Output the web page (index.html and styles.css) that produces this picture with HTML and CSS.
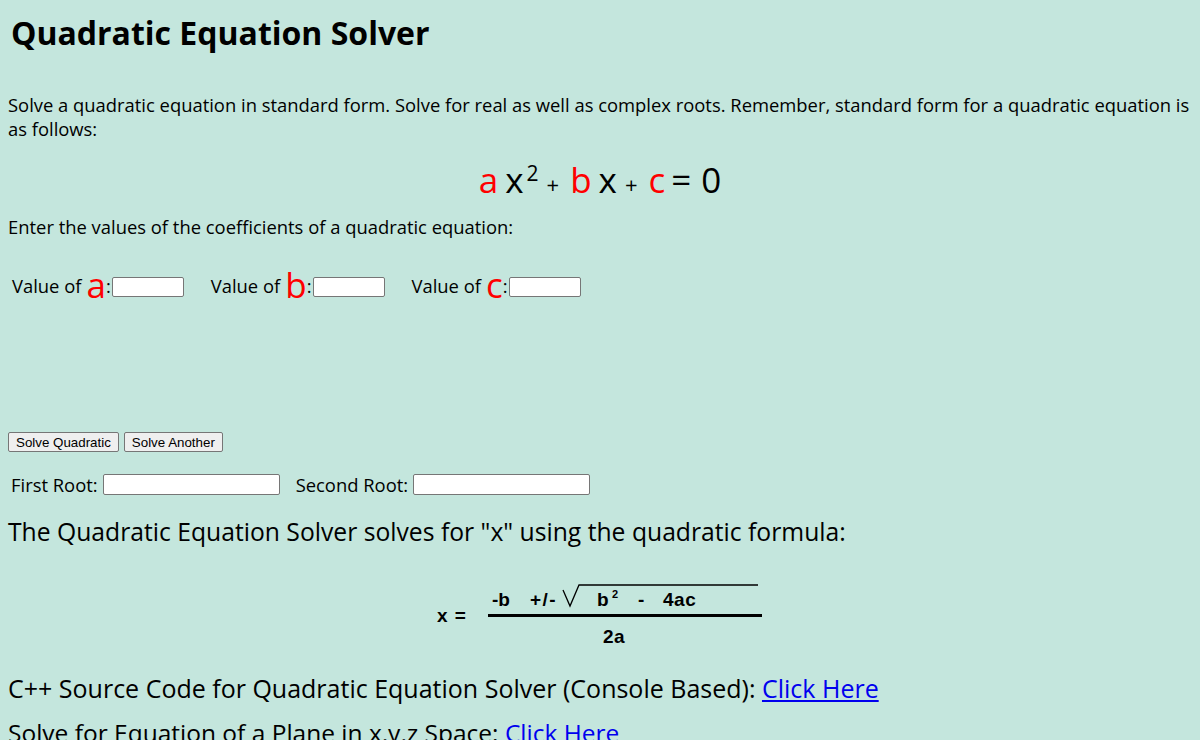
FILE: index.html
```html
<!DOCTYPE html>
<html>
<head>
<meta charset="utf-8">
<title>Quadratic Equation Solver</title>
<link rel="stylesheet" href="styles.css">
</head>
<body>
<h1 class="title">Quadratic Equation Solver</h1>
<p class="intro">Solve a quadratic equation in standard form. Solve for real as well as complex roots. Remember, standard form for a quadratic equation is as follows:</p>
<div class="equation"><span class="coef">a</span><span class="var">x</span><sup class="sq">2</sup><span class="plus">+</span><span class="coef">b</span><span class="var">x</span><span class="plus">+</span><span class="coef">c</span><span class="eq">=</span><span class="zero">0</span></div>
<p class="prompt">Enter the values of the coefficients of a quadratic equation:</p>
<div class="values">
  <label class="field">Value of <span class="big">a</span>:<input class="coef-in" type="text"></label>
  <label class="field">Value of <span class="big">b</span>:<input class="coef-in" type="text"></label>
  <label class="field">Value of <span class="big">c</span>:<input class="coef-in" type="text"></label>
</div>
<div class="buttons">
  <button class="btn" type="button">Solve Quadratic</button>
  <button class="btn" type="button">Solve Another</button>
</div>
<div class="roots">
  <label class="root">First Root: <input class="root-in" type="text"></label>
  <label class="root">Second Root: <input class="root-in" type="text"></label>
</div>
<p class="lead">The Quadratic Equation Solver solves for "x" using the quadratic formula:</p>
<div class="formula">
  <svg class="formula-svg" width="340" height="77" viewBox="0 0 340 77">
    <text x="7" y="44" class="fx">x =</text>
    <text x="62" y="28" class="ft">-b</text>
    <text x="100" y="28" class="ft" letter-spacing="1.5">+/-</text>
    <path d="M133 12 L140 28 L149 7 L328 7" fill="none" stroke="#000" stroke-width="1.3"/>
    <text x="167" y="28" class="ft">b</text>
    <text x="182" y="20" class="fs">2</text>
    <text x="208" y="28" class="ft">-</text>
    <text x="233" y="28" class="ft" letter-spacing="0.5">4ac</text>
    <line x1="58" y1="37.5" x2="332" y2="37.5" stroke="#000" stroke-width="3"/>
    <text x="173" y="65" class="ft" letter-spacing="0.5">2a</text>
  </svg>
</div>
<p class="lead link-line">C++ Source Code for Quadratic Equation Solver (Console Based): <a href="#">Click Here</a></p>
<p class="lead link-line2">Solve for Equation of a Plane in x,y,z Space: <a href="#">Click Here</a></p>
</body>
</html>
```
FILE: styles.css
```css
html, body {
  background: #c4e6dd;
}
body {
  margin: 0;
  padding: 0 8px;
  font-family: "Open Sans", "Noto Sans", sans-serif;
  font-size: 18.4px;
  color: #000;
  overflow: hidden;
}
.title {
  margin: 13px 0 0 3px;
  font-size: 32px;
  line-height: 40px;
  font-weight: 700;
}
.intro {
  margin: 40px 0 0;
  line-height: 24px;
}
.equation {
  margin-top: 19px;
  height: 40px;
  line-height: 40px;
  text-align: center;
  font-size: 35px;
  padding-left: 0;
}
.coef { color: #ff0000; }
.var { margin-left: 7px; }
.sq {
  font-size: 21px;
  vertical-align: 12px;
  line-height: 0;
  margin-left: 3px;
}
.plus {
  font-size: 22px;
  margin: 0 11px 0 8px;
}
.eq { margin: 0 10px 0 6px; }
.prompt {
  margin: 15px 0 0;
  line-height: 24px;
}
.values {
  margin-top: 26px;
  height: 40px;
  display: flex;
  align-items: center;
  gap: 27px;
  padding-left: 4px;
}
.field {
  display: flex;
  align-items: center;
}
.big {
  color: #ff0000;
  font-size: 35px;
  line-height: 40px;
  margin-left: 5px;
}
.coef-in {
  width: 72px;
  height: 20px;
  box-sizing: border-box;
  margin: 4px 0 0 1px;
  border: 1px solid #767676;
  border-radius: 2px;
  background: #fff;
  padding: 0;
}
.buttons {
  margin-top: 127px;
  display: flex;
  gap: 5px;
}
.btn {
  font-family: "Liberation Sans", Arial, sans-serif;
  font-size: 13.33px;
  height: 20px;
  padding: 0 7px;
  border: 1px solid #767676;
  border-radius: 2px;
  background: #efefef;
  color: #000;
}
.roots {
  margin-top: 20px;
  height: 24px;
  display: flex;
  align-items: center;
  gap: 16px;
  padding-left: 3px;
}
.root {
  display: flex;
  align-items: center;
  gap: 5px;
}
.root-in {
  width: 177px;
  height: 21px;
  box-sizing: border-box;
  border: 1px solid #767676;
  border-radius: 2px;
  background: #fff;
  padding: 0;
  margin: 0;
}
.lead {
  margin: 20px 0 0;
  font-size: 24.7px;
  line-height: 32px;
}
.formula {
  margin-top: 30px;
  height: 77px;
  display: flex;
  justify-content: center;
}
.formula-svg { display: block; }
.fx {
  font-family: "Liberation Sans", Arial, sans-serif;
  font-weight: 700;
  font-size: 19px;
  letter-spacing: 1px;
}
.ft {
  font-family: "Liberation Sans", Arial, sans-serif;
  font-weight: 700;
  font-size: 19px;
}
.fs {
  font-family: "Liberation Sans", Arial, sans-serif;
  font-weight: 700;
  font-size: 11px;
}
.link-line { margin-top: 17px; font-size: 25px; }
.link-line2 { margin-top: 13px; font-size: 24.5px; }
a { color: #0000ee; }
```
